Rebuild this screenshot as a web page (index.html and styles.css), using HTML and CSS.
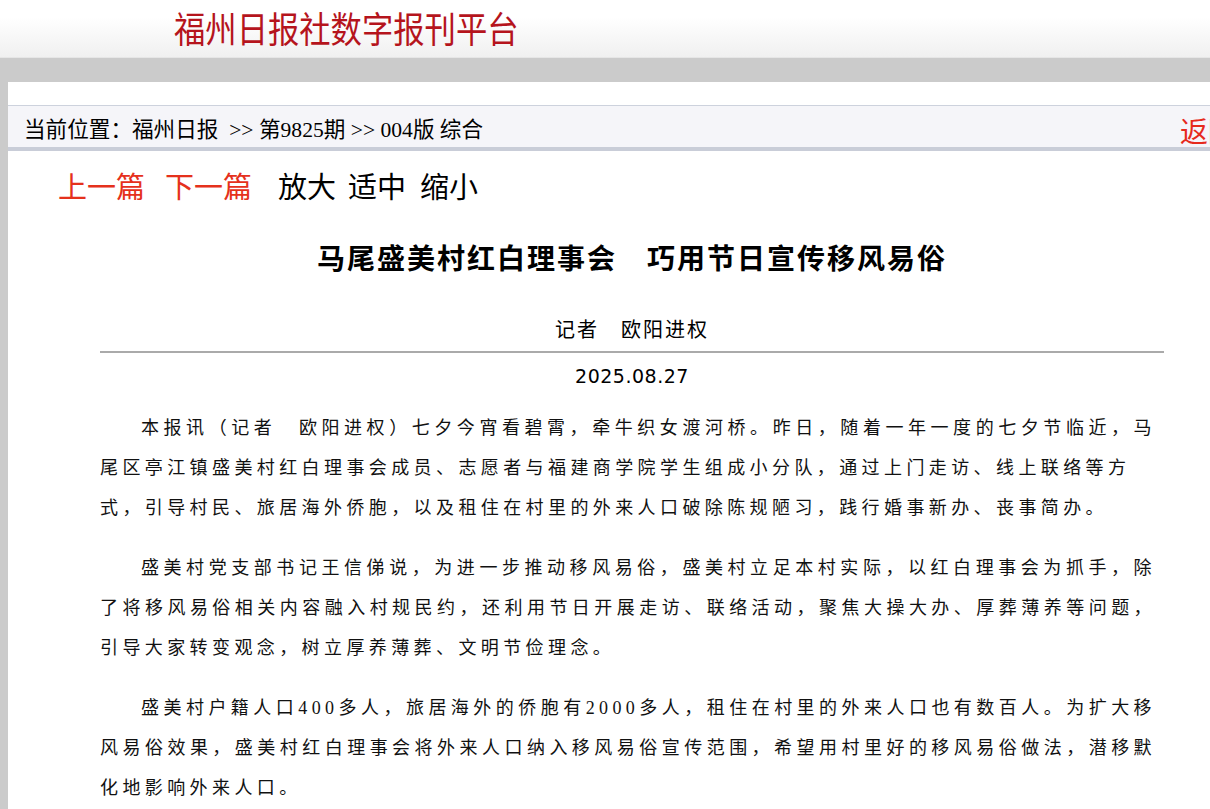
FILE: index.html
```html
<!DOCTYPE html>
<html>
  <head>
  <meta charset="utf-8">
  <title>马尾盛美村红白理事会　巧用节日宣传移风易俗</title>
  <link rel="stylesheet" href="styles.css">
  </head>
  <body>
    <div class="top">
      <div class="logo">福州日报社数字报刊平台</div>
    </div>
    <div class="page">
      <div class="crumb">
        <div class="crumb-path">当前位置：<a href="#">福州日报</a>&nbsp; &gt;&gt; <a href="#">第9825期</a> &gt;&gt; <a href="#">004版 综合</a></div>
        <a class="back" href="#">返回</a>
      </div>
      <div class="tools">
        <a class="prev" href="#">上一篇</a>
        <a class="next" href="#">下一篇</a>
        <a class="size big" href="#">放大</a>
        <a class="size mid" href="#">适中</a>
        <a class="size" href="#">缩小</a>
      </div>
      <div class="article">
        <h1 class="title">马尾盛美村红白理事会　巧用节日宣传移风易俗</h1>
        <div class="author">记者　欧阳进权</div>
        <div class="date">2025.08.27</div>
        <div class="content">
          <p>本报讯（记者　欧阳进权）七夕今宵看碧霄，牵牛织女渡河桥。昨日，随着一年一度的七夕节临近，马尾区亭江镇盛美村红白理事会成员、志愿者与福建商学院学生组成小分队，通过上门走访、线上联络等方<br>式，引导村民、旅居海外侨胞，以及租住在村里的外来人口破除陈规陋习，践行婚事新办、丧事简办。</p>
          <p>盛美村党支部书记王信俤说，为进一步推动移风易俗，盛美村立足本村实际，以红白理事会为抓手，除了将移风易俗相关内容融入村规民约，还利用节日开展走访、联络活动，聚焦大操大办、厚葬薄养等问题，引导大家转变观念，树立厚养薄葬、文明节俭理念。</p>
          <p>盛美村户籍人口400多人，旅居海外的侨胞有2000多人，租住在村里的外来人口也有数百人。为扩大移风易俗效果，盛美村红白理事会将外来人口纳入移风易俗宣传范围，希望用村里好的移风易俗做法，潜移默化地影响外来人口。</p>
        </div>
      </div>
    </div>
  </body>
</html>
```

FILE: styles.css
```css
    html, body {
      overflow-x: hidden;
    }
    body {
      margin: 0;
      background: #cbcbcb;
      font-family: "Noto Sans CJK SC", sans-serif;
      color: #000;
    }
    a {
      color: inherit;
      text-decoration: none;
    }
    .top {
      height: 57px;
      border-bottom: 1px solid #e6e6e6;
      background: linear-gradient(to bottom, #fff 0, #fff 30%, #f0f0f0 100%);
    }
    .logo {
      padding-left: 174px;
      font-size: 36px;
      line-height: 54px;
      color: #b5141c;
      white-space: nowrap;
      transform: scaleX(0.87);
      transform-origin: 174px 0;
    }
    .page {
      margin: 24px 0 0 8px;
      width: 1248px;
      padding-top: 23px;
      padding-bottom: 40px;
      background: #fff;
    }
    .crumb {
      display: flex;
      justify-content: space-between;
      height: 33px;
      padding: 8px 20px 0 16px;
      border-top: 1px solid #cdd2dd;
      border-bottom: 4px solid #c9cdd8;
      background: #f5f5f9;
      line-height: 33px;
    }
    .crumb-path {
      font-family: "Liberation Serif", "Noto Sans CJK SC", serif;
      font-size: 21.6px;
    }
    .back {
      font-size: 28px;
      color: #e62a1c;
    }
    .tools {
      display: flex;
      padding: 14px 0 0 50px;
      font-size: 29px;
      line-height: 40px;
    }
    .prev {
      color: #e5311c;
      margin-right: 20px;
    }
    .next {
      color: #e5311c;
      margin-right: 26px;
    }
    .big {
      margin-right: 12px;
    }
    .mid {
      margin-right: 14px;
    }
    .article {
      margin: 0 92px;
    }
    .title {
      margin: 32px 0 0;
      font-size: 28px;
      line-height: 40px;
      letter-spacing: 2px;
      text-align: center;
    }
    .author {
      margin-top: 37px;
      padding-bottom: 7px;
      border-bottom: 2px solid #aaa;
      font-size: 20px;
      line-height: 30px;
      letter-spacing: 2px;
      text-align: center;
    }
    .date {
      margin-top: 8px;
      font-family: "DejaVu Sans", sans-serif;
      font-size: 19px;
      line-height: 30px;
      letter-spacing: 0.5px;
      text-align: center;
    }
    .content {
      margin-top: 17px;
      width: 1056px;
      font-family: "Liberation Serif", "Noto Sans CJK SC", serif;
      font-size: 18px;
      line-height: 40px;
      letter-spacing: 4.4px;
      color: #111;
    }
    .content p {
      margin: 0 0 20px;
      text-indent: 41px;
      text-align: justify;
      text-spacing-trim: space-all;
    }
```
